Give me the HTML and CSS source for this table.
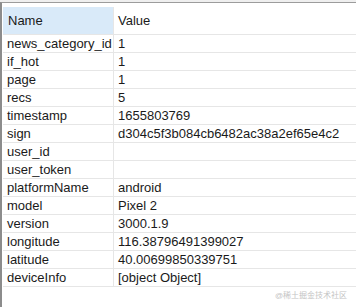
FILE: index.html
```html
<!DOCTYPE html>
<html>
<head>
<meta charset="utf-8">
<link rel="stylesheet" href="styles.css">
</head>
<body>
<div class="topstrip"></div>
<div class="frame">
  <div class="grid">
    <div class="hcell hname">Name</div>
    <div class="hcell hval">Value</div>
    <div class="cell name">news_category_id</div><div class="cell val">1</div>
    <div class="cell name">if_hot</div><div class="cell val">1</div>
    <div class="cell name">page</div><div class="cell val">1</div>
    <div class="cell name">recs</div><div class="cell val">5</div>
    <div class="cell name">timestamp</div><div class="cell val">1655803769</div>
    <div class="cell name">sign</div><div class="cell val">d304c5f3b084cb6482ac38a2ef65e4c2</div>
    <div class="cell name">user_id</div><div class="cell val"></div>
    <div class="cell name">user_token</div><div class="cell val"></div>
    <div class="cell name">platformName</div><div class="cell val">android</div>
    <div class="cell name">model</div><div class="cell val">Pixel 2</div>
    <div class="cell name">version</div><div class="cell val">3000.1.9</div>
    <div class="cell name">longitude</div><div class="cell val">116.38796491399027</div>
    <div class="cell name">latitude</div><div class="cell val">40.00699850339751</div>
    <div class="cell name">deviceInfo</div><div class="cell val">[object Object]</div>
  </div>
  <div class="watermark">@稀土掘金技术社区</div>
</div>
</body>
</html>
```
FILE: styles.css
```css
html, body {
  margin: 0;
  padding: 0;
  background: #ffffff;
}
body {
  width: 356px;
  height: 308px;
  overflow: hidden;
  font-family: "Liberation Sans", "Noto Sans CJK SC", sans-serif;
  font-size: 13px;
  color: #1a1a1a;
}
.topstrip {
  height: 2px;
  background: #efefef;
}
.frame {
  border-top: 1px solid #9c9c9c;
  border-left: 2px solid #8c8c8c;
  height: 305px;
  box-sizing: border-box;
  padding-top: 4px;
  padding-left: 1px;
  display: flex;
  flex-direction: column;
}
.grid {
  display: grid;
  grid-template-columns: 111px 1fr;
}
.hcell {
  height: 27px;
  border-bottom: 1px solid #e6e6e6;
  display: flex;
  align-items: center;
  white-space: nowrap;
}
.hname {
  background: #d9eaf9;
  padding-left: 5px;
  border-right: 1px solid #e6e6e6;
}
.hval {
  padding-left: 4px;
}
.cell {
  height: 17px;
  border-bottom: 1px solid #e6e6e6;
  display: flex;
  align-items: center;
  white-space: nowrap;
  overflow: hidden;
}
.name {
  padding-left: 4px;
  border-right: 1px solid #e6e6e6;
}
.val {
  padding-left: 4px;
}
.watermark {
  align-self: flex-end;
  margin-top: 3px;
  margin-right: 9px;
  font-size: 8px;
  color: #c4c4c4;
  line-height: 12px;
}
```
